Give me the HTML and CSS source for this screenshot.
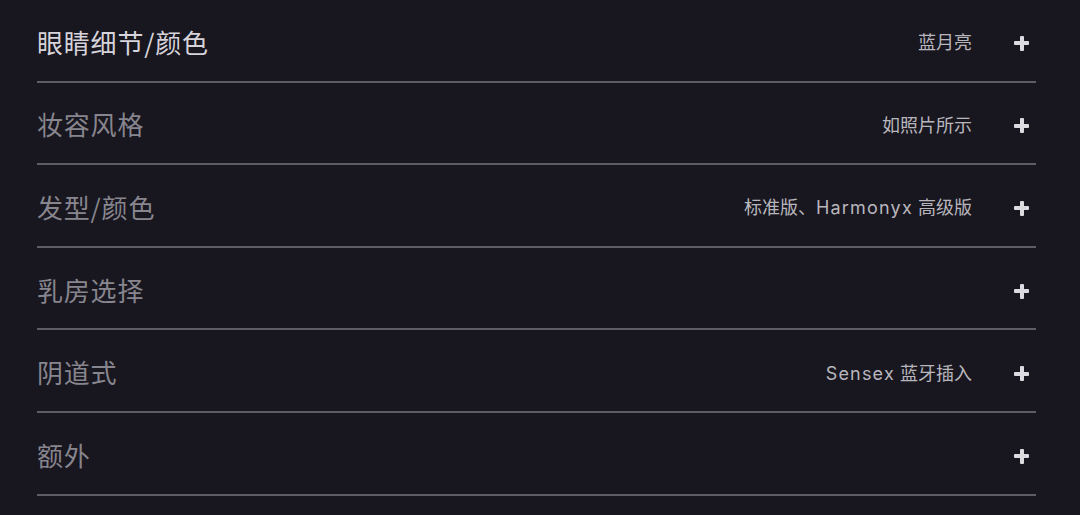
FILE: index.html
```html
<!DOCTYPE html>
<html lang="zh">
<head>
<meta charset="utf-8">
<link rel="stylesheet" href="styles.css">
</head>
<body>
<div class="list">
  <div class="row active"><span class="title">眼睛细节/颜色</span><span class="value">蓝月亮</span><span class="plus"></span></div>
  <div class="row"><span class="title">妆容风格</span><span class="value">如照片所示</span><span class="plus"></span></div>
  <div class="row"><span class="title">发型/颜色</span><span class="value">标准版、<span class="latin">Harmonyx</span> 高级版</span><span class="plus"></span></div>
  <div class="row"><span class="title">乳房选择</span><span class="value"></span><span class="plus"></span></div>
  <div class="row"><span class="title">阴道式</span><span class="value"><span class="latin">Sensex</span> 蓝牙插入</span><span class="plus"></span></div>
  <div class="row"><span class="title">额外</span><span class="value"></span><span class="plus"></span></div>
</div>
</body>
</html>
```
FILE: styles.css
```css
html, body {
  margin: 0;
  padding: 0;
  background: #18161f;
  height: 100%;
  overflow: hidden;
}
body {
  font-family: "Inter", "Noto Sans CJK SC", sans-serif;
}
.list {
  margin-left: 37px;
  width: 999px;
}
.row {
  box-sizing: border-box;
  height: 82.6px;
  border-bottom: 2px solid #5e5c64;
  display: flex;
  align-items: center;
  padding-top: 2px;
}
.title {
  flex: 1;
  font-size: 26px;
  color: #87858d;
  font-family: "Noto Sans CJK SC", sans-serif;
  letter-spacing: 0.8px;
}
.row.active .title {
  color: #d6d4da;
}
.value {
  font-size: 18px;
  color: #b8b6bd;
  font-family: "Inter", "Noto Sans CJK SC", sans-serif;
}
.latin {
  letter-spacing: 1.2px;
}
.plus {
  position: relative;
  width: 15px;
  height: 15px;
  margin-left: 42px;
  margin-right: 7px;
  top: 2px;
}
.plus::before, .plus::after {
  content: "";
  position: absolute;
  background: #dcdce0;
  border-radius: 1px;
}
.plus::before {
  left: 0;
  right: 0;
  top: 5.5px;
  height: 4px;
}
.plus::after {
  top: 0;
  bottom: 0;
  left: 5.5px;
  width: 4px;
}
```
